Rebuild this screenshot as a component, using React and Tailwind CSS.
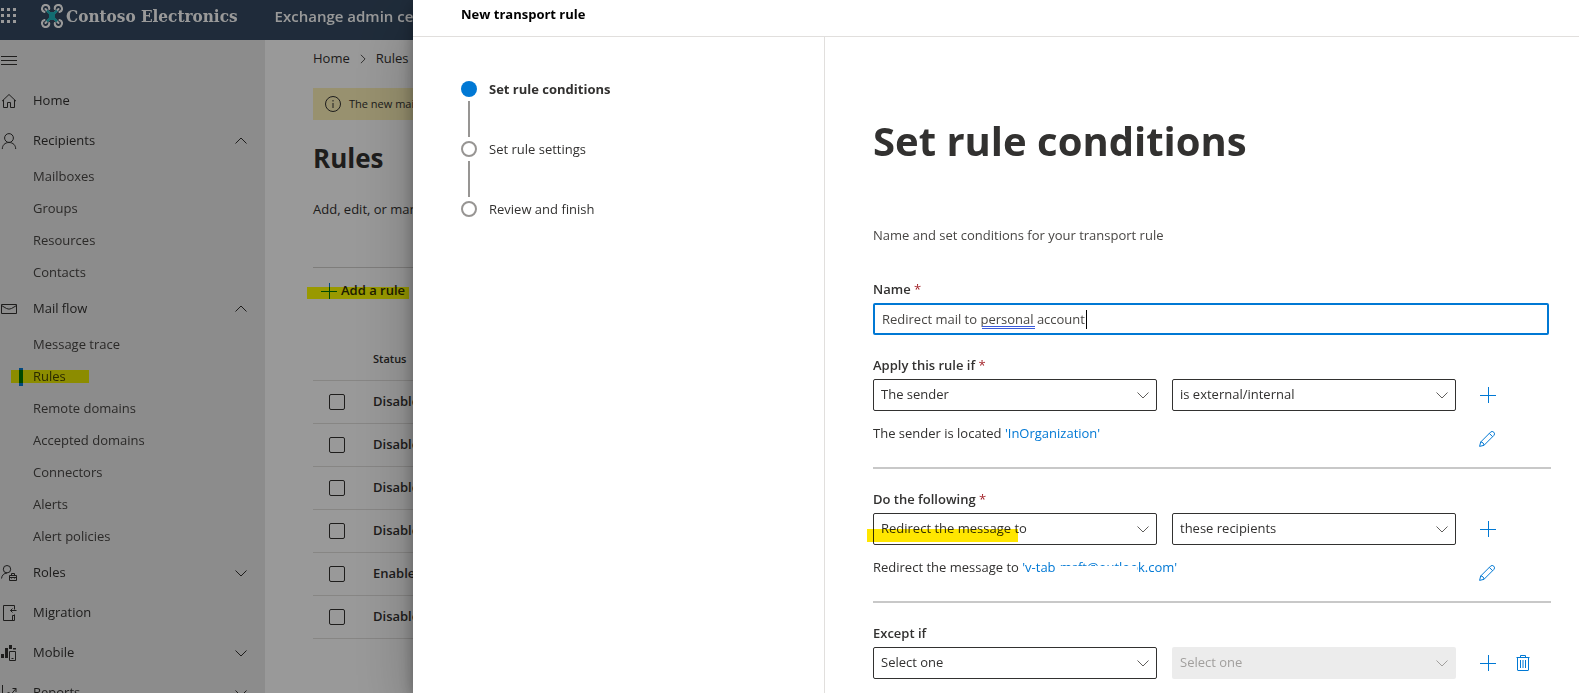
const Svg = ({ className = "size-4", children, ...rest }) => (
  <svg viewBox="0 0 16 16" fill="none" stroke="currentColor" strokeWidth="1" aria-hidden="true" className={`shrink-0 ${className}`} {...rest}>
    {children}
  </svg>
);

const icons = {
  home: (
    <Svg>
      <path d="M1 8.2 8 1.5l7 6.7M2.5 7v7.5h4V9.500h3v5h4V7" />
    </Svg>
  ),
  person: (
    <Svg>
      <circle cx="8" cy="5" r="4.400" />
      <path d="M1.300 16c0-3.600 2.500-6.500 6.700-6.500s6.700 2.900 6.700 6.500" />
    </Svg>
  ),
  mail: (
    <Svg>
      <path d="M.5 3.500h15v9H.5zM.5 4.500 5.500 7.500Q8 8.800 10.500 7.500l5-3" />
    </Svg>
  ),
  roles: (
    <Svg>
      <circle cx="6" cy="4.200" r="3.700" />
      <path d="M.5 13.500c.3-3.200 2.400-5.300 5.500-5.500M8.500 10.500h7v5h-7zM8.500 12.500h7M10.500 10.500v-2h3v2M10.500 12v1.500M13.500 12v1.500" />
    </Svg>
  ),
  migration: (
    <Svg>
      <path d="M13.500 4.500v-4h-11v15h11V9.500M15.500 5.500h-6M11.500 3.500l-2 2 2 2M11.500 15V10.500h2" />
    </Svg>
  ),
  mobile: (
    <Svg>
      <path d="M0 9h3v4H0zM4 3h3v10H4zM8 0h3v4H8zM12 3h3v1.500h-3z" fill="currentColor" stroke="none" />
      <path d="M8.500 6.500h6v9h-6zM10.500 13.500h2" />
    </Svg>
  ),
  reports: (
    <Svg>
      <path d="M1.500 0v14.500H16M4.500 11l3-4 2.500 2.500 5-6M11.500 3.500H15V7" />
    </Svg>
  ),
};

const Chevron = ({ className = "size-3", d = "M.5 3.500 6 9l5.500-5.500" }) => (
  <Svg viewBox="0 0 12 12" className={className}>
    <path d={d} />
  </Svg>
);

const Plus = () => (
  <Svg>
    <path d="M8.500 0v16M0 8.500h16" />
  </Svg>
);

const Pencil = () => (
  <Svg>
    <path d="M.6 15.400 1.700 11 11.500 1.200a2.300 2.300 0 0 1 3.300 3.300L5 14.300zM1.700 11c1.800 0 3.300 1.500 3.300 3.300M10.300 2.400l3.300 3.300" />
  </Svg>
);

const Trash = () => (
  <Svg>
    <path d="M1.500 2.500h13M5.500 2.500v-2h5v2M2.500 2.500v12.500q0 .5.5.5h10q.5 0 .5-.5V2.500M5.500 5v8M8 5v8M10.500 5v8" />
  </Svg>
);

const Logo = () => (
  <svg viewBox="0 0 22 24" aria-hidden="true" className="h-6 w-[22px] shrink-0" fill="none">
    <g stroke="#fff" strokeWidth="2" strokeLinecap="round">
      <path d="M3.500 8A3.600 3.600 0 1 1 8.200 5M4.500 5 8 8.500" />
      <path d="M18.500 8A3.600 3.600 0 1 0 13.800 5M17.500 5 14 8.500" />
      <path d="M3.500 16A3.600 3.600 0 1 0 8.200 19M4.500 19 8 15.500" />
      <path d="M18.500 16A3.600 3.600 0 1 1 13.800 19M17.500 19 14 15.500" />
    </g>
    <path d="M6 6.500 16 17.500M16 6.500 6 17.500" stroke="#1fb5bd" strokeWidth="2.500" />
    <path d="M8 8h6v8H8z" fill="#1fb5bd" />
  </svg>
);

const nav = [
  { label: "Home", icon: "home" },
  { label: "Recipients", icon: "person", items: ["Mailboxes", "Groups", "Resources", "Contacts"] },
  {
    label: "Mail flow",
    icon: "mail",
    items: ["Message trace", "Rules", "Remote domains", "Accepted domains", "Connectors", "Alerts", "Alert policies"],
  },
  { label: "Roles", icon: "roles", closed: true },
  { label: "Migration", icon: "migration" },
  { label: "Mobile", icon: "mobile", closed: true },
  { label: "Reports", icon: "reports", closed: true },
];

const NavRow = ({ entry }) => {
  const body = (
    <>
      {icons[entry.icon]}
      <span className="flex-1 text-left">{entry.label}</span>
      {entry.items && <Chevron d="M.5 8.500 6 3l5.500 5.500" />}
      {entry.closed && <Chevron />}
    </>
  );
  const style = "flex h-10 w-full items-center gap-4 pr-[18px] pl-px";
  return entry.items || entry.closed ? (
    <button type="button" aria-expanded={Boolean(entry.items)} className={style}>
      {body}
    </button>
  ) : (
    <a href="#" className={style}>
      {body}
    </a>
  );
};

const SideNav = () => (
  <nav className="w-[265px] shrink-0 overflow-hidden bg-[#e9e9e9] pt-px">
    <button type="button" aria-label="Collapse navigation" className="flex h-10 items-center pl-px">
      <Svg>
        <path d="M0 3.500h16M0 7.500h16M0 11.500h16" />
      </Svg>
    </button>
    <ul>
      {nav.map((entry) => (
        <li key={entry.label}>
          <NavRow entry={entry} />
          {entry.items && (
            <ul className="text-[#484644]">
              {entry.items.map((item) => (
                <li key={item} className="relative">
                  <a href="#" className="flex h-8 items-center pl-[33px]">
                    {item}
                  </a>
                  {item === "Rules" && (
                    <>
                      <span className="absolute top-[7px] left-[19px] h-[18px] w-1 bg-[#0078d4]" />
                      <span className="absolute top-[9px] left-[11px] h-[13px] w-[78px] bg-[#ffff00] mix-blend-multiply" />
                    </>
                  )}
                </li>
              ))}
            </ul>
          )}
        </li>
      ))}
    </ul>
  </nav>
);

const rules = ["Disabled", "Disabled", "Disabled", "Disabled", "Enabled", "Disabled"];

const RulesPage = () => (
  <main className="min-w-0 flex-1 bg-white pt-2 pl-12">
    <div className="flex h-[22px] items-center gap-2">
      <a href="#">Home</a>
      <Chevron className="size-[10px]" d="M3.500 1 8.500 6l-5 5" />
      <span>Rules</span>
    </div>
    <div className="mt-[18px] flex h-8 items-center gap-2 bg-[#fdf2b9] pl-3 text-[11px]">
      <Svg>
        <circle cx="8" cy="8" r="7.500" />
        <path d="M8 7v5M8 4v1.500" />
      </Svg>
      The new mail flow rules UI is now the default in the new EAC
    </div>
    <h1 className="mt-5 h-9 text-[26px] leading-9 font-bold">Rules</h1>
    <p className="mt-[23px] h-5 leading-5">Add, edit, or manage rules</p>
    <div className="mt-12 flex h-[46px] items-center border-t border-[#d2d0ce]">
      <button type="button" className="relative flex items-center gap-1 pl-2 font-semibold">
        <span className="text-[#0078d4]">
          <Plus />
        </span>
        Add a rule
        <span className="absolute top-[6px] -right-1 -left-[6px] h-3 bg-[#ffff00] mix-blend-multiply" />
      </button>
    </div>
    <table className="mt-[26px] w-full border-separate border-spacing-0 text-left font-semibold">
      <thead>
        <tr className="h-[42px]">
          <th className="w-[60px] border-b border-[#e1dfdd]" aria-label="Select" />
          <th className="border-b border-[#e1dfdd] text-[11px] font-semibold">Status</th>
        </tr>
      </thead>
      <tbody>
        {rules.map((status, i) => (
          <tr key={i} className="h-[43px]">
            <td className="border-b border-[#e1dfdd] pl-4">
              <input
                type="checkbox"
                aria-label={`Select rule ${i + 1}`}
                className="block size-4 appearance-none rounded-xs border border-[#323130]"
              />
            </td>
            <td className="border-b border-[#e1dfdd]">{status}</td>
          </tr>
        ))}
      </tbody>
    </table>
  </main>
);

const steps = ["Set rule conditions", "Set rule settings", "Review and finish"];

const Steps = () => (
  <ol className="w-[412px] shrink-0 border-r border-[#e1dfdd] pt-11 pl-12">
    {steps.map((step, i) => (
      <li key={step} className="flex gap-3">
        <div className="flex flex-col items-center">
          <span
            className={
              i === 0 ? "size-4 rounded-full bg-[#0078d4]" : "size-4 rounded-full border-2 border-[#979593]"
            }
          />
          {i < 2 && <span className="my-1 h-9 w-[2px] bg-[#979593]" />}
        </div>
        <span className={i === 0 ? "leading-4 font-bold" : "leading-4"}>{step}</span>
      </li>
    ))}
  </ol>
);

const Star = () => <span className="font-normal text-[#a4262c]"> *</span>;

const Dropdown = ({ id, value, label, disabled }) => (
  <div className="relative">
    <select
      id={id}
      aria-label={label}
      disabled={disabled}
      className={
        disabled
          ? "h-8 w-full appearance-none rounded-xs bg-[#ececec] px-2 text-[#a19f9d] opacity-100"
          : "h-8 w-full appearance-none rounded-xs border border-[#323130] bg-white px-[7px]"
      }
    >
      <option>{value}</option>
    </select>
    <span
      className={
        disabled
          ? "pointer-events-none absolute top-[10px] right-2 text-[#a19f9d]"
          : "pointer-events-none absolute top-[10px] right-2 text-[#605e5c]"
      }
    >
      <Chevron />
    </span>
  </div>
);

const Condition = ({ id, label, required, first, second, disabled, children }) => (
  <section className="pt-5">
    <label htmlFor={id} className="block h-5 leading-5 font-semibold">
      {label}
      {required && <Star />}
    </label>
    <div className="mt-1 flex items-center">
      <div className="grid flex-1 grid-cols-2 gap-[15px]">
        <Dropdown id={id} value={first} />
        <Dropdown value={second} label={`${label}: detail`} disabled={disabled} />
      </div>
      <div className="flex w-[95px] gap-[19px] pl-6 text-[#0078d4]">
        <button type="button" aria-label="Add">
          <Plus />
        </button>
        {disabled && (
          <button type="button" aria-label="Delete">
            <Trash />
          </button>
        )}
      </div>
    </div>
    {children && (
      <div className="flex h-[58px] items-start border-b-2 border-[#c8c8c8]">
        <p className="flex-1 pt-3 leading-5">{children}</p>
        <div className="w-[95px] pt-5 pl-[23px] text-[#0078d4]">
          <button type="button" aria-label="Edit" className="block">
            <Pencil />
          </button>
        </div>
      </div>
    )}
  </section>
);

const RulePanel = () => (
  <div
    role="dialog"
    aria-label="New transport rule"
    className="absolute inset-y-0 right-0 left-[413px] flex flex-col overflow-hidden bg-white shadow-[0_4px_14px_rgba(0,0,0,0.3),0_25px_58px_rgba(0,0,0,0.25)]"
  >
    <div className="flex h-[37px] shrink-0 items-center border-b border-[#e1dfdd] pb-[6px] pl-12 font-bold text-black">
      New transport rule
    </div>
    <div className="flex flex-1">
      <Steps />
      <form className="min-w-0 flex-1 pt-[78px] pr-7 pl-12">
        <h2 className="h-[52px] text-[40px] leading-[52px] font-bold">Set rule conditions</h2>
        <p className="mt-[58px] h-5 leading-5 text-[#484644]">Name and set conditions for your transport rule</p>
        <label htmlFor="name" className="mt-[34px] block h-5 leading-5 font-semibold">
          Name
          <Star />
        </label>
        <div className="relative mt-1 mr-[2px]">
          <input
            id="name"
            defaultValue="Redirect mail to personal account"
            className="block h-8 w-full rounded-xs border-2 border-[#0078d4] px-[7px] text-[#484644] outline-none"
          />
          <span className="absolute top-[23px] left-[109px] h-[3px] w-[53px] border-y border-[#3b5bdb]" />
          <span className="absolute top-[7px] left-[213px] h-[19px] w-px bg-black" />
        </div>
        <Condition id="if" label="Apply this rule if" required first="The sender" second="is external/internal">
          The sender is located{" "}
          <a href="#" className="text-[#0078d4]">
            'InOrganization'
          </a>
        </Condition>
        <div className="relative">
          <Condition id="do" label="Do the following" required first="Redirect the message to" second="these recipients">
            Redirect the message to{" "}
            <a href="#" className="relative text-[#0078d4]">
              'v-tab-msft@outlook.com'
              <span className="absolute top-2 left-[33px] h-3 w-[82px] bg-white" />
            </a>
          </Condition>
          <span className="absolute top-[60px] -left-[6px] h-[13px] w-[151px] bg-[#ffe600] mix-blend-multiply" />
        </div>
        <Condition id="except" label="Except if" first="Select one" second="Select one" disabled />
      </form>
    </div>
  </div>
);

export default function App() {
  return (
    <div className="relative flex h-screen flex-col overflow-hidden font-['Open_Sans','Noto_Sans',sans-serif] text-[13px] text-[#323130]">
      <header className="flex h-10 shrink-0 items-center bg-[#344961] pl-px text-white">
        <button type="button" aria-label="App launcher" className="-mt-2">
          <Svg className="size-4" stroke="none" fill="currentColor">
            <path d="M0 0h3v3H0zM6 0h3v3H6zM12 0h3v3h-3zM0 6h3v3H0zM6 6h3v3H6zM12 6h3v3h-3zM0 12h3v3H0zM6 12h3v3H6zM12 12h3v3h-3z" />
          </Svg>
        </button>
        <div className="ml-6 flex items-center gap-[3px] pb-2">
          <Logo />
          <span className="font-['DejaVu_Serif_Condensed','DejaVu_Serif',serif] text-[17px] leading-6 font-bold whitespace-nowrap">
            Contoso Electronics
          </span>
        </div>
        <span className="ml-[37px] pb-2 text-[15px] font-semibold">Exchange admin center</span>
      </header>
      <div className="flex min-h-0 flex-1">
        <SideNav />
        <RulesPage />
      </div>
      <div className="absolute inset-0 bg-black/40" />
      <RulePanel />
    </div>
  );
}
